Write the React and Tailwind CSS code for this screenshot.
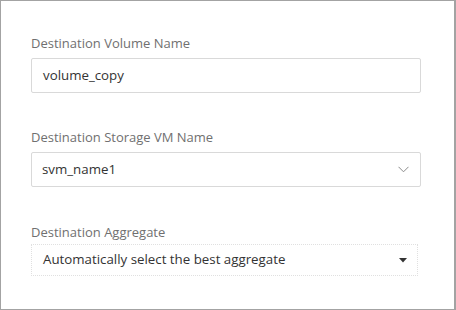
export default function App() {
  return (
    <div
      className="w-[456px] h-[310px] bg-white border border-r-2 border-[#a3a3a3] pl-[30px] pt-[33px]"
      style={{ fontFamily: '"Open Sans", "Liberation Sans", sans-serif' }}
    >
      {/* Volume name */}
      <div className="text-[13px] leading-[18px] text-[#707070]">Destination Volume Name</div>
      <div className="mt-[6px] w-[390px] h-[35px] border border-[#d9d9d9] rounded-[2px] flex items-center pl-[11px] text-[13.3px] text-[#333]">
        volume_copy
      </div>

      {/* Storage VM */}
      <div className="mt-[35px] text-[13px] leading-[18px] text-[#707070]">Destination Storage VM Name</div>
      <div className="mt-[6px] w-[390px] h-[35px] border border-[#d9d9d9] rounded-[2px] flex items-center justify-between pl-[10px] pr-[11px] text-[13.3px] text-[#333]">
        <span>svm_name1</span>
        <svg width="11" height="7" viewBox="0 0 11 7" fill="none">
          <path d="M0.5 0.8 L5.5 5.8 L10.5 0.8" stroke="#8a8a8a" strokeWidth="1" />
        </svg>
      </div>

      {/* Aggregate */}
      <div className="mt-[36px] text-[13px] leading-[18px] text-[#707070]">Destination Aggregate</div>
      <div className="mt-[3px] w-[387px] h-[32px] border border-dotted border-[#e0e0e0] flex items-center justify-between pl-[11px] pr-[10px] text-[13.3px] text-[#333]">
        <span>Automatically select the best aggregate</span>
        <svg width="8" height="5" viewBox="0 0 8 5">
          <path d="M0 0 L8 0 L4 4.5 Z" fill="#333" />
        </svg>
      </div>
    </div>
  );
}
